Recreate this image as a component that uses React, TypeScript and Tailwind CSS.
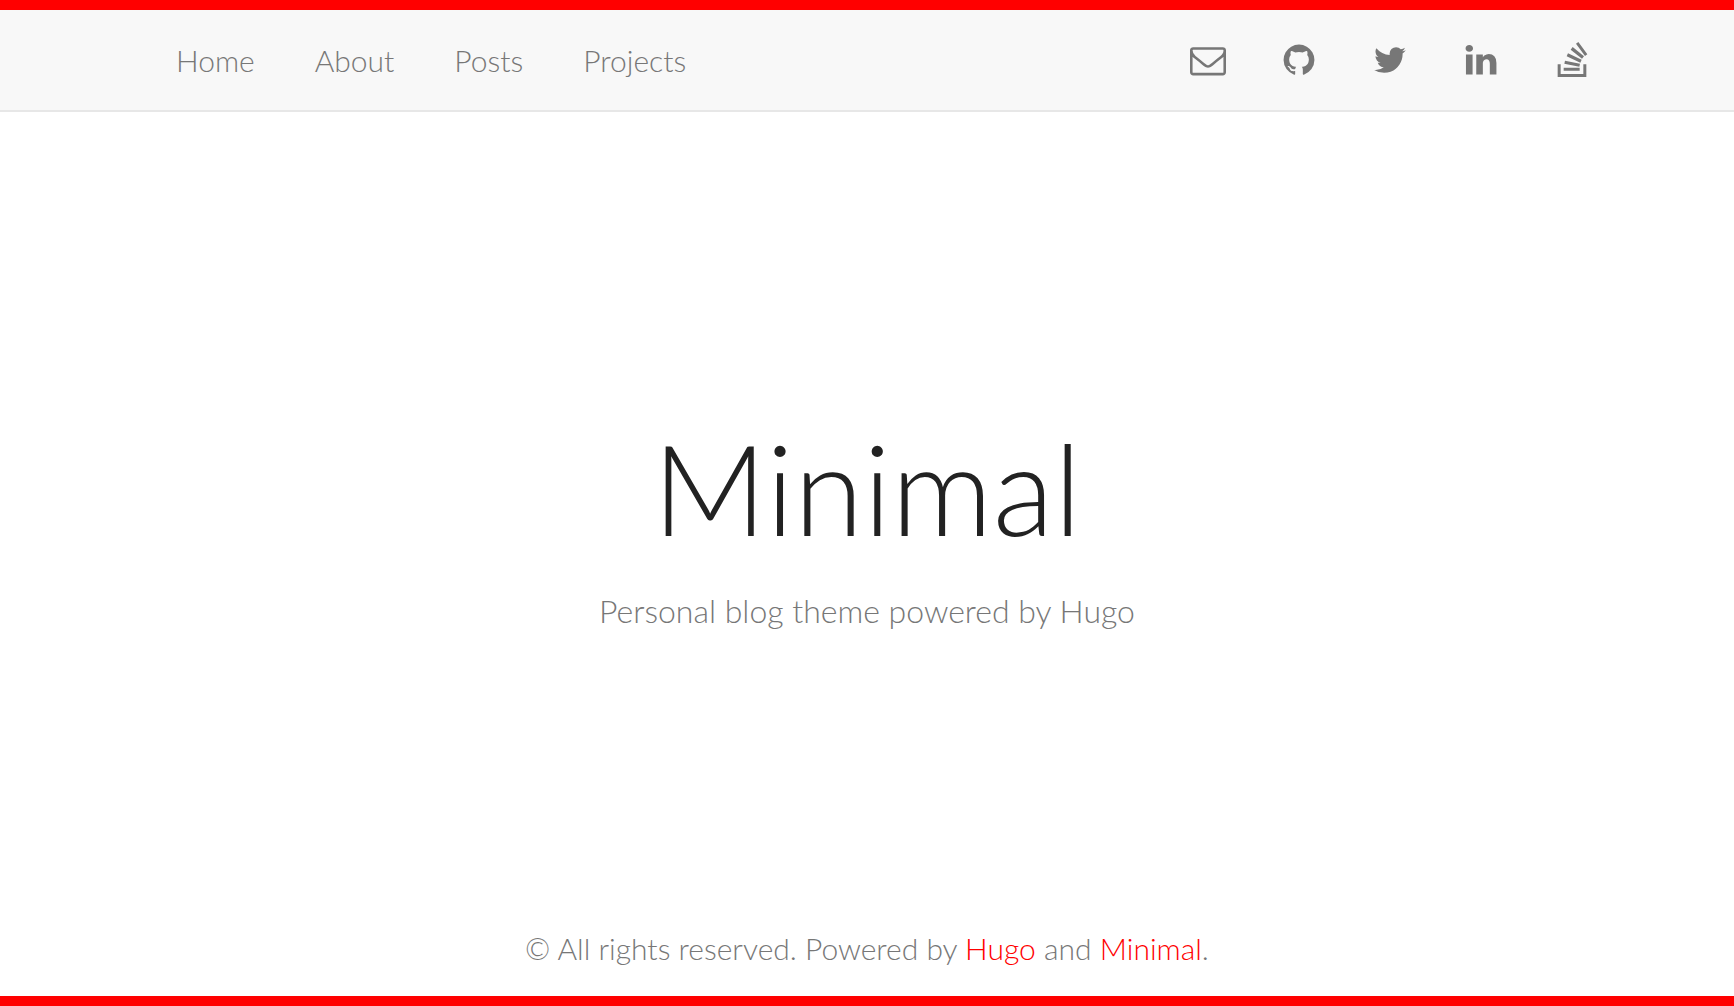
import React from "react";

interface IconProps {
  path: string;
  viewBox?: string;
}

const Icon: React.FC<IconProps> = ({ path, viewBox = "0 0 1792 1792" }) => (
  <svg viewBox={viewBox} className="h-9 w-9" fill="currentColor" aria-hidden="true">
    <path d={path} />
  </svg>
);

const menu = [
  { name: "Home", url: "#home" },
  { name: "About", url: "#about" },
  { name: "Posts", url: "#posts" },
  { name: "Projects", url: "#projects" },
];

const social = [
  {
    name: "Email",
    url: "#email",
    path: "M1664 1504v-768q-32 36-69 66-268 206-426 338-51 43-83 67t-86.5 48.5-102.5 24.5h-2q-48 0-102.5-24.5t-86.5-48.5-83-67q-158-132-426-338-37-30-69-66v768q0 13 9.5 22.5t22.5 9.5h1472q13 0 22.5-9.5t9.5-22.5zm0-1051v-24.5l-.5-13-3-12.5-5.5-9-9-7.5-14-2.5h-1472q-13 0-22.5 9.5t-9.5 22.5q0 168 147 284 193 152 401 317 6 5 35 29.5t46 37.5 44.5 31.5 50.5 27.5 43 9h2q20 0 43-9t50.5-27.5 44.5-31.5 46-37.5 35-29.5q208-165 401-317 54-43 100.5-115.5t46.5-131.5zm128-37v1088q0 66-47 113t-113 47h-1472q-66 0-113-47t-47-113v-1088q0-66 47-113t113-47h1472q66 0 113 47t47 113z",
  },
  {
    name: "GitHub",
    url: "#github",
    path: "M896 128q209 0 385.5 103t279.5 279.5 103 385.5q0 251-146.5 451.5t-378.5 277.5q-27 5-40-7t-13-30q0-3 .5-76.5t.5-134.5q0-97-52-142 57-6 102.5-18t94-39 81-66.5 53-105 20.5-150.5q0-119-79-206 37-91-8-204-28-9-81 11t-92 44l-38 24q-93-26-192-26t-192 26q-16-11-42.5-27t-83.5-38.5-85-13.5q-45 113-8 204-79 87-79 206 0 85 20.5 150t52.5 105 80.5 67 94 39 102.5 18q-39 36-49 103-21 10-45 15t-57 5-65.5-21.5-55.5-62.5q-19-32-48.5-52t-49.5-24l-20-3q-21 0-29 4.5t-5 11.5 9 14 13 12l7 5q22 10 43.5 38t31.5 51l10 23q13 38 44 61.5t67 30 69.5 7 55.5-3.5l23-4q0 38 .5 88.5t.5 54.5q0 18-13 30t-40 7q-232-77-378.5-277.5t-146.5-451.5q0-209 103-385.5t279.5-279.5 385.5-103z",
  },
  {
    name: "Twitter",
    url: "#twitter",
    path: "M1684 408q-67 98-162 167 1 14 1 42 0 130-38 259.5t-115.5 248.5-184.5 210.5-258 146-323 54.5q-271 0-496-145 35 4 78 4 225 0 401-138-105-2-188-64.5t-114-159.5q33 5 61 5 43 0 85-11-112-23-185.5-111.5t-73.5-205.5v-4q68 38 146 41-66-44-105-115t-39-154q0-88 44-163 121 149 294.5 238.5t371.5 99.5q-8-38-8-74 0-134 94.5-228.5t228.5-94.5q140 0 236 102 109-21 205-78-37 115-142 178 93-10 186-50z",
  },
  {
    name: "LinkedIn",
    url: "#linkedin",
    path: "M477 625v991h-330v-991h330zm21-306q1 73-50.5 122t-135.5 49h-2q-82 0-132-49t-50-122q0-74 51.5-122.5t134.5-48.5 133 48.5 51 122.5zm1166 729v568h-329v-530q0-105-40.5-164.5t-126.5-59.5q-63 0-105.5 34.5t-63.5 85.5q-11 30-11 81v553h-329q2-399 2-647t-1-296l-1-48h329v144h-2q20-32 41-56t56.5-52 87-43.5 114.5-15.5q171 0 275 113.5t104 332.5z",
  },
  {
    name: "Stack Overflow",
    url: "#stackoverflow",
    viewBox: "40 36 108 108",
    path: "M51 103h9v29h68v-29h9v38h-86zM69 113h48v9h-48zM73 92l45 9-2 9-45-9zM82 70l41 19-4 9-41-19zM96 51l34 28-6 7-34-27zM113 36l27 37-7 5-27-37z",
  },
];

const App: React.FC = () => {
  return (
    <div className="flex min-h-screen flex-col border-y-10 border-[#ff0000] bg-white font-['Lato',sans-serif] text-[30px] leading-10 font-light text-[#777777]">
      <nav className="border-b-2 border-[#e7e7e7] bg-[#f8f8f8]">
        <div className="mx-auto flex h-25 w-full max-w-[1470px] items-center justify-between pr-3 pl-11">
          <ul className="flex gap-15">
            {menu.map((item) => (
              <li key={item.name}>
                <a href={item.url}>{item.name}</a>
              </li>
            ))}
          </ul>
          <ul className="flex items-center gap-[55px]">
            {social.map((item) => (
              <li key={item.name}>
                <a href={item.url} aria-label={item.name} className="block">
                  <Icon path={item.path} viewBox={item.viewBox} />
                </a>
              </li>
            ))}
          </ul>
        </div>
      </nav>
      <main className="flex flex-1 flex-col items-center justify-center pt-4 text-center">
        <h1 className="text-[126px] leading-none text-[#222222]">Minimal</h1>
        <p className="mt-10 text-[32px]">Personal blog theme powered by Hugo</p>
      </main>
      <footer className="pb-7 text-center">
        © All rights reserved. Powered by{" "}
        <a href="#hugo" className="text-[#ff0000]">
          Hugo
        </a>{" "}
        and{" "}
        <a href="#minimal" className="text-[#ff0000]">
          Minimal
        </a>
        .
      </footer>
    </div>
  );
};

export default App;
